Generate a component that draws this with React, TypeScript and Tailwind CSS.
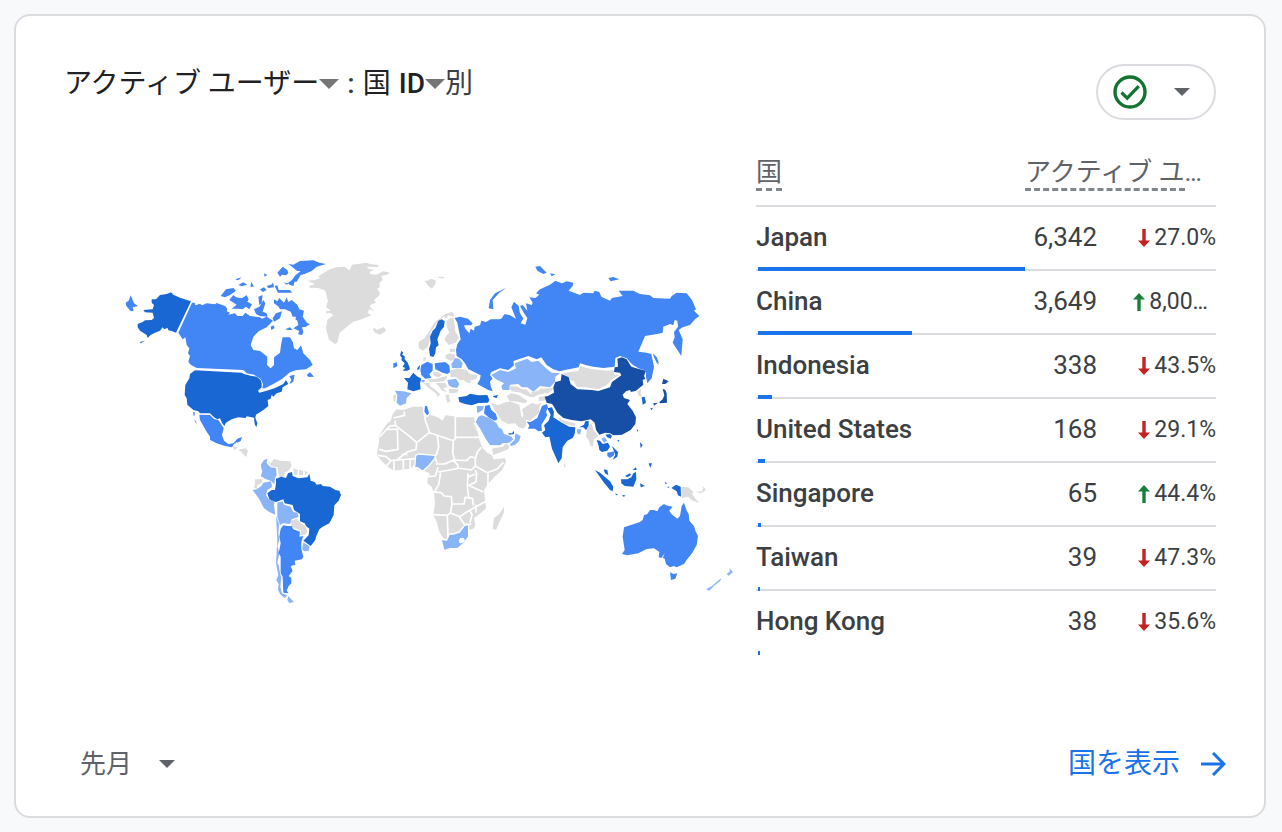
import type { ReactNode } from "react";

interface CountryRow {
  country: string;
  users: number;
  change: string;
  up: boolean;
}

interface Land {
  fill: string;
  points: string[];
}

interface Region {
  name: string;
  transform: string;
  lands: Land[];
}

const rows: CountryRow[] = [
  { country: "Japan", users: 6342, change: "27.0%", up: false },
  { country: "China", users: 3649, change: "8,00…", up: true },
  { country: "Indonesia", users: 338, change: "43.5%", up: false },
  { country: "United States", users: 168, change: "29.1%", up: false },
  { country: "Singapore", users: 65, change: "44.4%", up: true },
  { country: "Taiwan", users: 39, change: "47.3%", up: false },
  { country: "Hong Kong", users: 38, change: "35.6%", up: false },
];

// Map scale, from no data to most users
const NONE = "#dcdcdc";
const LOW = "#8ab4f8";
const MID = "#4285f4";
const HIGH = "#1967d2";
const TOP = "#174ea6";

const regions: Region[] = [
  {
    name: "north-america",
    transform: "translate(102 0)",
    lands: [
      {
        fill: HIGH,
        points: [
          "155,148 168,148 180,135 200,132 213,127 220,134 240,143 273,154 228,248 215,243 205,241 203,234 192,238 188,232 180,242 165,248 152,255 143,264 140,255 120,242 113,232 113,222 128,216 135,211 155,210 162,204 160,196 158,188 135,187 130,180 158,178 162,165 155,158",
          "285,361 425,368 432,372 455,378 470,380 482,390 485,400 485,412 474,422 478,428 500,422 525,414 550,402 558,390 565,402 548,412 545,425 530,430 520,440 515,434 512,446 503,450 505,468 490,480 468,494 466,503 472,520 469,532 464,522 462,503 440,499 437,504 415,502 395,508 378,518 373,528 366,518 360,505 352,508 342,502 330,490 300,490 295,484 280,480 262,464 260,445 254,435 256,405 268,385 270,372",
          "120,276 135,272 122,280",
        ],
      },
      {
        fill: MID,
        points: [
          "77,158 86,152 92,136 98,150 102,160 114,168 98,172 101,182 92,184 86,176 79,168",
          "276,158 284,158 286,166 300,161 306,166 320,160 345,163 350,159 375,168 382,176 380,184 390,188 385,194 405,190 412,198 428,198 436,188 450,198 480,202 486,206 500,200 519,212 500,232 476,244 460,260 452,285 460,300 480,303 502,320 501,345 512,355 522,345 522,322 540,308 543,285 548,262 570,262 578,275 582,295 592,300 603,286 610,310 630,330 638,345 618,358 590,360 570,367 545,388 520,402 495,415 487,415 489,402 482,387 462,374 440,370 430,360 290,354 272,344 265,335 270,318 264,310 268,295 260,285 256,262 248,268 235,248",
          "298,494 330,495 342,507 355,510 365,525 371,535 366,555 372,572 385,582 400,580 412,566 426,561 422,573 412,578 408,576 407,580 402,582 396,592 375,588 350,580 330,570 330,560 318,542 300,510",
          "282,510 288,514 290,522",
          "280,486 284,486 284,497 280,496",
          "362,138 378,118 400,114 408,122 390,135 375,142",
          "388,150 400,135 408,142 425,145 440,136 446,148 442,155 456,163 448,178 438,170 428,178 415,176 395,176 410,164",
          "415,105 430,97 442,104 425,109",
          "405,88 425,82 415,91",
          "454,95 462,110 451,110",
          "475,140 488,135 485,160 478,165",
          "462,178 478,170 490,150 496,160 488,185 500,190 503,200 480,198 468,192",
          "480,118 492,112 500,120 488,126",
          "500,108 520,102 522,112 505,114",
          "568,378 584,374 580,395 568,402 574,390",
          "620,375 630,367 642,380 626,381",
          "512,230 520,226 524,234 514,240",
          "492,70 502,75 494,80",
        ],
      },
      {
        fill: NONE,
        points: ["398,588 412,592 404,602", "415,600 436,595 444,602 438,620 430,610"],
      },
    ],
  },
  {
    name: "arctic",
    transform: "translate(612 0)",
    lands: [
      {
        fill: MID,
        points: [
          "55,42 70,44 90,33 130,31 148,38 168,42 140,50 125,63 104,72 92,75 80,95 74,95 70,108 58,104 55,98 66,90 76,76 92,64 80,62 68,52",
          "22,68 38,50 52,60 55,70 48,76 36,74 30,80",
          "40,96 50,100 66,95 50,104",
          "14,108 22,106 26,120 60,120 66,128 24,128",
          "12,148 22,154 28,144 42,158 50,142 55,156 65,150 82,164 88,178 102,182 98,200 112,220 120,222 108,230 96,232 100,246 96,256 84,252 88,243 70,235 85,225 82,212 76,208 78,200 68,200 62,185 45,178 30,178 26,170 12,160",
          "18,190 36,184 30,205 12,215 8,205",
          "45,238 60,232 68,240 56,240",
          "6,98 12,104 6,106",
        ],
      },
      {
        fill: NONE,
        points: [
          "112,92 135,90 150,85 145,78 180,58 200,52 225,50 238,62 246,44 290,38 300,42 325,45 325,51 290,50 296,56 312,60 300,65 300,72 318,74 340,64 360,68 350,74 334,78 338,90 328,100 330,110 322,116 330,130 326,138 312,150 318,158 300,165 302,174 316,185 298,178 293,188 304,196 275,208 250,215 225,235 208,250 202,278 195,282 176,268 168,235 172,210 190,195 180,188 168,190 168,184 182,182 168,170 174,154 166,122 145,114 118,113 118,108 135,102",
          "308,238 314,234 320,240 342,231 348,243 330,254 315,248",
          "463,92 472,92 484,86 498,92 496,102 486,116 475,108",
          "500,82 524,80 518,86",
        ],
      },
    ],
  },
  {
    name: "south-america",
    transform: "translate(522 570)",
    lands: [
      {
        fill: LOW,
        points: [
          "62,75 72,60 82,56 80,70 92,82 108,84 110,104 105,115 103,132 92,122 75,116 62,108 67,95",
          "38,150 50,148 64,138 70,128 92,124 96,135 95,142 82,150 78,165 86,178 104,182 102,195 106,224 88,216 72,205 58,178",
          "112,188 128,184 132,194 152,200 160,216 172,218 176,230 155,238 150,252 130,250 120,255 112,232",
          "190,307 208,319 206,333 192,334 187,328",
          "108,228 117,252 115,280 118,300 112,318 118,340 112,370 116,375 120,400 124,412 121,440 126,460 142,466 134,474 122,464 114,450 116,432 109,420 115,405 108,370 112,300",
          "145,468 152,476 162,486 148,489 142,480",
        ],
      },
      {
        fill: NONE,
        points: [
          "85,62 92,70 102,56 120,62 150,64 155,78 145,92 134,98 132,110 118,112 112,82 92,78",
          "160,83 166,88 174,90 172,104 162,104",
          "177,90 190,92 188,106 177,105",
          "194,92 204,97 196,107",
          "45,118 68,118 66,128 52,136 50,147 42,142 45,132",
          "152,242 170,236 178,246 195,258 203,272 195,285 180,285 184,272 155,260",
          "0,28 15,27 22,35 20,50 8,42",
        ],
      },
      {
        fill: HIGH,
        points: [
          "108,116 124,110 138,114 144,100 156,96 158,108 175,115 202,112 208,101 212,122 224,126 230,134 243,132 248,138 270,140 286,150 298,152 303,165 296,182 283,196 281,225 268,250 248,260 238,268 228,290 226,300 212,318 190,302 206,286 208,266 198,258 194,250 180,244 180,222 162,210 158,195 134,190 130,178 108,186 88,178 82,160 95,150 105,150 108,130",
        ],
      },
      {
        fill: MID,
        points: [
          "122,266 130,256 142,258 155,258 160,268 180,275 178,290 190,288 184,305 184,328 190,350 186,358 164,362 166,374 152,378 158,393 146,408 154,414 154,430 146,438 140,452 146,460 130,458 128,410 122,400 122,350 116,340 122,310 118,290",
        ],
      },
    ],
  },
  {
    name: "europe",
    transform: "translate(912 150)",
    lands: [
      {
        fill: NONE,
        points: [
          "200,62 225,42 245,36 254,44 248,50 236,46 230,54 220,50 204,64 195,78 182,95 178,125 174,142 158,152 146,144 146,126 162,116 178,94 190,72",
          "230,62 240,55 250,54 254,75 256,95 267,112 258,128 236,135 224,120 228,108 238,98 230,80",
          "238,146 256,146 254,156 240,156",
          "228,164 240,160 256,165 254,180 240,182 226,174",
          "70,284 78,284 76,306 70,302",
          "240,212 262,205 290,210 300,222 322,225 320,236 300,242 305,248 294,250 280,240 268,240 258,232 242,232",
          "188,216 204,216 216,224 206,232 192,228",
          "172,236 192,238 206,234 230,228 232,234 222,244 200,246 180,246",
          "196,250 226,248 232,262 220,264 230,276 216,272 206,258",
          "236,266 266,268 262,278 238,280",
          "160,250 178,248 180,258 194,268 210,282 204,292 198,280 176,264",
          "226,284 240,284 236,292 242,304 232,308",
          "160,172 168,172 166,184 160,182",
        ],
      },
      {
        fill: HIGH,
        points: [
          "205,62 215,58 224,64 222,80 212,92 206,108 202,118 206,136 198,142 196,160 190,171 180,168 177,148 182,130 180,110 188,92 196,85",
          "94,152 100,158 96,164 104,168 104,178 112,186 118,200 120,208 112,212 98,212 106,204 98,200 104,190 94,180 96,174 90,166",
          "142,204 150,194 148,208 142,210",
          "102,234 118,234 130,218 140,228 154,236 150,250 152,268 130,274 112,268 114,248",
          "265,292 290,288 300,281 325,286 352,285 358,300 354,308 325,309 305,316 285,312 268,306",
          "368,288 384,285 380,294 372,292",
        ],
      },
      {
        fill: MID,
        points: [
          "70,190 80,187 82,198 70,205",
          "154,195 172,185 188,192 188,212 178,222 184,234 165,236 154,225 151,210",
          "194,190 225,186 238,196 240,216 232,222 218,218 196,208",
          "345,318 358,314 364,330 378,342 382,358 374,362 355,352 342,340",
        ],
      },
      {
        fill: LOW,
        points: [
          "75,272 100,274 124,280 110,294 108,310 90,317 80,308 82,286",
          "154,240 165,240 162,248 154,246",
          "244,192 256,174 268,176 278,190 274,204 246,204",
          "232,240 258,236 268,252 262,264 246,262 236,256",
          "320,318 342,318 338,330 322,340",
        ],
      },
    ],
  },
  {
    name: "middle-east",
    transform: "translate(912 420)",
    lands: [
      {
        fill: LOW,
        points: [
          "317,96 325,80 335,76 360,85 380,100 386,112 396,118 402,132 425,140 430,148 418,158 398,160 390,166 360,165 348,148 330,115",
          "436,130 452,138 448,152 436,164 422,168 420,162 434,150",
        ],
      },
      { fill: HIGH, points: ["414,130 426,130 432,122 432,132 418,134"] },
      {
        fill: NONE,
        points: [
          "366,176 376,174 398,170 410,160 418,168 415,178 370,195",
          "362,36 372,42 384,46 402,38 420,34 448,44 454,78 468,92 468,108 460,116 446,112 436,100 415,102 395,92 378,66 370,52",
          "456,58 475,46 488,38 500,44 514,38 508,52 508,66 500,76 480,92 458,88 460,74",
        ],
      },
      {
        fill: MID,
        points: ["470,95 482,96 502,84 508,68 516,48 530,42 534,52 528,66 532,76 514,105 516,122 505,124 495,116 474,116 478,106"],
      },
    ],
  },
  {
    name: "north-asia",
    transform: "translate(1122 0)",
    lands: [
      {
        fill: MID,
        points: [
          "52,218 44,204 60,200 84,206 98,220 94,226 72,226 76,236 88,250 92,236 102,242 104,230 120,226 124,212 138,216 152,208 176,208 184,206 194,192 210,196 228,206 214,172 222,155 236,168 240,190 250,205 242,220 256,224 262,204 252,190 240,168 248,165 262,182 258,160 275,165 278,158 268,142 286,144 298,134 288,130 300,118 330,104 346,92 366,100 380,94 400,98 398,108 386,122 420,135 430,128 460,130 464,122 478,126 484,140 510,152 516,144 548,138 536,122 580,122 600,132 630,136 640,144 690,146 695,138 710,128 740,130 756,150 768,178 762,182 778,198 765,208 750,225 728,232 716,240 728,268 724,318 698,278 704,262 702,246 714,230 712,212 704,210 700,226 690,222 670,230 668,248 652,252 615,258 595,305 620,308 634,312 642,350 635,385 622,400 618,380 618,362 595,355 575,342 560,325 540,318 526,324 524,350 490,354 460,350 440,346 420,340 416,352 375,360 358,364 340,358 320,345 304,322 290,328 265,318 220,333 222,346 205,360 180,355 154,366 150,375 158,386 150,394 152,408 158,424 145,420 112,402 120,388 122,376 95,362 85,358 75,340 65,328 50,318 48,300 52,282 62,268",
          "146,175 150,150 165,130 200,113 178,128 158,150 160,178",
          "286,50 300,48 320,68 310,72 292,62",
          "330,70 346,73 335,79",
          "505,84 520,81 538,88 512,94",
          "638,312 646,320 656,346 650,338",
        ],
      },
      {
        fill: LOW,
        points: [
          "154,375 180,360 205,366 228,355 224,340 262,326 275,336 295,332 318,355 335,368 360,370 346,380 345,395 330,412 300,408 280,425 262,412 245,412 235,402 210,404 208,420 188,420 184,408 192,400 168,388",
        ],
      },
      {
        fill: NONE,
        points: [
          "206,414 214,408 234,410 246,418 260,418 272,432 292,424 296,434 280,442 268,440 242,428 216,424",
          "200,438 214,430 235,434 262,452 256,460 236,456 208,452",
          "300,416 344,414 324,430 296,428",
          "296,440 322,438 326,450 296,454",
          "370,370 415,362 422,348 440,354 460,358 500,362 520,360 524,374 538,376 515,388 500,405 475,418 435,412 410,410 402,394 384,386",
        ],
      },
    ],
  },
  {
    name: "east-asia",
    transform: "translate(1392 270)",
    lands: [
      {
        fill: TOP,
        points: [
          "44,170 54,168 72,158 70,142 76,126 92,122 95,102 116,112 122,132 142,148 185,150 205,153 240,142 246,126 274,106 270,98 252,96 254,82 264,80 262,56 276,52 290,58 304,80 324,86 348,92 342,108 346,116 338,120 340,134 318,152 303,156 300,150 288,154 278,164 282,174 300,180 292,192 308,212 318,232 316,252 302,270 276,284 250,286 240,280 226,278 208,284 198,270 194,248 182,238 155,244 125,240 100,234 82,218 72,200 66,192 50,188",
          "398,146 406,150 410,160 411,188 390,190 388,186 398,178 403,166",
          "370,190 384,188 372,197",
          "361,205 369,205 364,211",
          "400,116 416,124 406,132 396,132",
        ],
      },
      {
        fill: HIGH,
        points: [
          "52,205 66,202 72,216 70,232 92,246 118,260 136,262 134,282 128,294 112,302 98,322 95,355 85,370 80,358 66,326 58,290 46,292 36,278 46,270 42,256 56,242 62,224",
          "148,262 162,254 166,244 176,242 176,260 168,270 160,262",
          "200,300 210,302 218,312 234,308 240,320 232,332 216,336 208,330 206,318",
          "226,284 240,282 246,288 242,296 232,292",
          "246,318 264,336 262,350 248,360 256,344",
          "335,172 344,170 348,188 338,194",
          "195,390 210,398 226,412 240,424 250,440 248,454 240,450 222,428",
          "221,388 232,390 235,406 225,400",
          "273,418 292,418 304,412 310,400 318,396 319,418 310,440 284,438 274,430",
          "285,408 300,400 303,405 292,412",
          "308,390 318,382 320,390",
          "330,307 338,315 332,325",
          "356,370 366,370 361,384",
          "330,430 345,438 332,442",
          "262,299 268,301 264,306",
          "320,268 325,270 322,276",
          "256,460 264,464 258,466",
          "276,464 288,467 280,470",
          "404,426 412,430 406,432",
          "412,440 420,440 414,444",
          "424,444 438,434 452,440 453,470 444,466 440,454",
        ],
      },
      {
        fill: MID,
        points: ["232,338 254,334 252,346 240,354 232,348", "368,40 380,52 388,72 378,62"],
      },
      { fill: LOW, points: ["140,268 154,268 150,284 142,280", "214,296 224,292 232,302 222,308"] },
      {
        fill: NONE,
        points: [
          "84,232 104,242 136,250 135,258 104,252 88,242",
          "172,262 184,250 192,272 206,288 192,298 188,322 180,314 176,300 168,290",
          "322,154 334,146 332,160 336,170 324,166",
          "100,368 108,378 103,382",
          "0,158 22,152 60,148 40,162 20,164",
        ],
      },
    ],
  },
  {
    name: "oceania",
    transform: "translate(1542 540)",
    lands: [
      {
        fill: MID,
        points: [
          "132,292 155,284 180,276 188,270 192,256 202,252 210,240 222,240 232,244 238,232 252,222 258,226 278,230 268,242 274,252 292,266 300,258 305,228 312,218 320,242 326,252 328,272 342,288 346,302 354,318 350,345 336,370 320,390 312,402 290,412 282,408 270,412 258,402 254,386 248,384 254,370 244,384 236,382 238,366 222,355 200,357 175,370 142,376 126,372 134,360 128,320",
          "270,427 280,432 292,430 286,446 273,450",
        ],
      },
      {
        fill: NONE,
        points: [
          "304,170 325,172 340,186 336,192 346,206 358,218 338,212 324,200 305,205",
          "348,185 366,184 372,172 378,180 362,190",
          "366,168 374,174 370,176",
        ],
      },
      {
        fill: LOW,
        points: ["378,478 396,468 424,444 420,454 404,466 388,482", "440,432 450,424 448,414 459,426 446,437"],
      },
    ],
  },
];

const africaCoast =
  "68,72 80,58 100,60 130,50 162,50 166,76 180,74 204,82 218,92 226,76 245,78 262,82 285,82 312,82 316,98 310,98 324,128 328,150 338,174 352,188 366,196 370,208 405,205 408,215 396,240 372,262 352,284 342,300 345,330 348,355 325,375 312,384 316,405 312,415 300,420 290,410 270,430 235,450 220,445 208,425 200,395 190,376 195,340 192,310 185,290 172,280 174,262 180,250 160,242 145,240 130,226 122,236 100,238 72,242 55,232 38,216 22,198 22,184 28,150 26,140 48,104 62,92";

// Borders cut out of the African landmass
const africaBorders = [
  "70,84 104,76 102,64",
  "76,92 76,106 60,108 48,120 28,142",
  "82,118 84,178 48,184 28,178",
  "76,106 120,140 140,158",
  "48,118 84,118",
  "160,50 166,92 174,112 178,128 140,158 138,178 112,186 82,208",
  "178,128 190,132 250,152 256,146 256,80",
  "256,142 328,142",
  "202,136 206,170 200,192 194,198 202,222",
  "250,152 248,190 254,210",
  "198,222 224,222 250,210 264,226 262,236 240,240 205,246",
  "254,210 290,212 302,200 316,204",
  "316,206 322,186 334,172",
  "316,206 316,228 304,240 264,234",
  "316,228 352,248 380,238 400,218",
  "354,250 354,286",
  "316,240 320,250 318,276 292,288",
  "292,262 316,252",
  "212,248 206,284 192,308",
  "172,260 196,258 204,232",
  "190,306 214,308 222,318 244,320 246,342",
  "294,250 292,288 296,322",
  "292,284 340,306",
  "246,342 282,342 286,322 308,326 310,346",
  "246,342 242,368 232,376 190,374",
  "242,370 270,380 290,366 318,350 348,334",
  "232,376 234,440",
  "268,380 284,404 304,402",
  "300,362 306,374 300,398",
  "318,344 318,368",
  "24,196 48,200 62,212 84,210 100,192 112,194",
  "62,212 50,228",
  "72,212 72,242",
  "100,210 100,238",
  "120,206 120,236",
  "84,210 136,206",
];

function Caret({ className }: { className: string }) {
  return (
    <svg viewBox="0 0 20 10" className={className} fill="currentColor" aria-hidden="true">
      <path d="M0 0h20L10 10z" />
    </svg>
  );
}

function TrendArrow({ up }: { up: boolean }) {
  return (
    <svg
      viewBox="0 0 12 18"
      className={up ? "h-[18px] w-3 text-[#188038]" : "h-[18px] w-3 rotate-180 text-[#c5221f]"}
      fill="currentColor"
      aria-hidden="true"
    >
      <path d="M6 0l6 6.500H7.700V18H4.300V6.500H0z" />
    </svg>
  );
}

function WorldMap() {
  return (
    <svg viewBox="0 -318 2070 1536" className="w-full" role="img" aria-label="World map">
      {regions.map((region) => (
        <g key={region.name} transform={region.transform}>
          {region.lands.map((land) =>
            land.points.map((points) => <polygon key={points} points={points} fill={land.fill} />)
          )}
        </g>
      ))}

      {/* Africa */}
      <g transform="translate(912 420)" strokeLinejoin="round">
        <polygon points={africaCoast} fill={NONE} />
        {africaBorders.map((points) => (
          <polyline key={points} points={points} fill="none" stroke="#fff" strokeWidth="5" />
        ))}
        <polygon points="402,350 402,366 378,420 368,416 372,384 388,372" fill={NONE} />
        <g stroke="#fff" strokeWidth="4">
          <polygon points="163,48 172,44 176,58 179,70 172,80 161,66" fill={MID} />
          <polygon points="137,196 146,192 168,194 196,196 194,206 176,228 158,244 144,234 134,232" fill={LOW} />
          <polygon
            points="213,448 230,450 238,432 250,432 268,426 284,406 296,404 296,440 282,460 262,476 240,476 222,482"
            fill={LOW}
          />
        </g>
        <path d="M266 452l6-9 10 2 3 7-7 7-9 1z" fill="#fff" />
      </g>
    </svg>
  );
}

function HeaderLabel({ children }: { children: ReactNode }) {
  return <span className="inline-block border-b-[3px] border-dashed border-[#80868b]">{children}</span>;
}

export default function App() {
  const max = rows[0].users;

  return (
    <main className="min-h-screen bg-[#f8f9fb] py-[14px] pr-4 pl-[14px] font-[Roboto,'Noto_Sans_CJK_JP',sans-serif] text-[#3c4043]">
      <section className="flex min-h-[804px] flex-col rounded-2xl border-2 border-[#dadce0] bg-white">
        <header className="flex items-start justify-between px-12 pt-12">
          <h2 className="flex items-center pt-[2px] text-[28px] leading-9 font-normal text-[#202124]">
            <button className="flex items-center">
              アクティブ ユーザー
              <Caret className="h-[10px] w-5 text-[#757575]" />
            </button>
            <span className="px-2 font-medium text-[#3c4043]">:</span>
            <button className="flex items-center gap-2">
              国 <span className="font-medium">ID</span>
            </button>
            <button aria-label="国 ID">
              <Caret className="h-[10px] w-5 text-[#757575]" />
            </button>
            <span className="text-[#3c4043]">別</span>
          </h2>
          <button
            className="flex h-14 w-[120px] items-center justify-between rounded-full border-2 border-[#dadce0] pr-6 pl-3"
            aria-label="データの品質"
          >
            <svg viewBox="0 0 40 40" className="size-10" fill="none" stroke="#137333" aria-hidden="true">
              <circle cx="20" cy="20" r="15" strokeWidth="3.4" />
              <path d="M11.500 20.500l5.700 5.700L28.800 14.200" strokeWidth="3.200" />
            </svg>
            <Caret className="h-2 w-4 text-[#5f6368]" />
          </button>
        </header>

        <div className="grid grid-cols-[3fr_2fr] items-start pt-6 pr-12 pl-[50px]">
          <WorldMap />
          <table className="w-full table-fixed border-separate border-spacing-0">
            <colgroup>
              <col className="w-[269px]" />
              <col className="w-[72px]" />
              <col />
            </colgroup>
            <thead>
              <tr className="h-[63px] text-[26px] leading-8 text-[#5f6368]">
                <th className="border-b-2 border-[#dadce0] p-0 pt-3 text-left align-top font-normal">
                  <HeaderLabel>国</HeaderLabel>
                </th>
                <th
                  colSpan={2}
                  className="border-b-2 border-[#dadce0] p-0 pt-3 text-left align-top font-normal whitespace-nowrap"
                >
                  <HeaderLabel>アクティブ ユ</HeaderLabel>…
                </th>
              </tr>
            </thead>
            <tbody className="[&>tr:last-child>*]:border-transparent">
              {rows.map((row) => (
                <tr key={row.country} className="h-16 text-[26px] leading-8">
                  <th
                    scope="row"
                    className="relative border-b-2 border-[#dadce0] p-0 pb-[2px] text-left font-medium whitespace-nowrap"
                  >
                    {row.country}
                    <div className="absolute right-0 -bottom-[2px] left-[2px]">
                      <div
                        className="h-1 min-w-[2px] bg-[#1a73e8]"
                        style={{ width: `${(row.users / max) * 100}%` }}
                      />
                    </div>
                  </th>
                  <td className="border-b-2 border-[#dadce0] p-0 pb-[2px] text-right">
                    {row.users.toLocaleString("en-US")}
                  </td>
                  <td className="border-b-2 border-[#dadce0] p-0 text-[23px]">
                    <div
                      className={
                        row.change.endsWith("…")
                          ? "flex items-center justify-end gap-1 pr-2"
                          : "flex items-center justify-end gap-1"
                      }
                    >
                      <TrendArrow up={row.up} />
                      {row.change}
                    </div>
                  </td>
                </tr>
              ))}
            </tbody>
          </table>
        </div>

        <footer className="mt-auto flex items-center justify-between pr-[38px] pb-8 pl-16 leading-10">
          <label className="relative flex items-center text-[#5f6368]">
            <select
              aria-label="期間"
              className="appearance-none bg-transparent pr-[42px] text-[26px] outline-none"
              defaultValue="month"
            >
              <option value="month">先月</option>
            </select>
            <Caret className="pointer-events-none absolute right-0 h-2 w-4" />
          </label>
          <a href="#countries" className="flex items-center gap-5 text-[28px] text-[#1a73e8]">
            国を表示
            <svg viewBox="0 0 26 24" className="h-6 w-[26px]" fill="none" stroke="currentColor" strokeWidth="3" aria-hidden="true">
              <path d="M1 12h22M13 1l11 11-11 11" />
            </svg>
          </a>
        </footer>
      </section>
    </main>
  );
}
